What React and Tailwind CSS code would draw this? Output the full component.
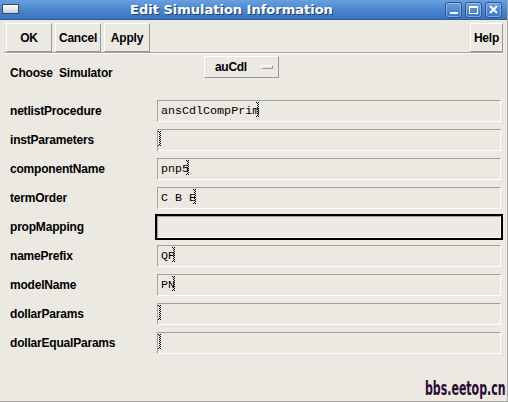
import React from "react";

const Cursor = () => (
  <svg
    width="5"
    height="15"
    viewBox="0 0 5 15"
    shapeRendering="crispEdges"
    className="inline-block align-top relative -top-[2px] -ml-[3px]"
  >
    <g fill="#000">
      <rect x="0" y="0" width="1" height="1" />
      <rect x="2" y="0" width="1" height="1" />
      <rect x="1" y="1" width="1" height="1" />
      <rect x="1" y="3" width="1" height="1" />
      <rect x="1" y="5" width="1" height="1" />
      <rect x="1" y="7" width="1" height="1" />
      <rect x="1" y="9" width="1" height="1" />
      <rect x="1" y="11" width="1" height="1" />
      <rect x="1" y="13" width="1" height="1" />
      <rect x="0" y="14" width="1" height="1" />
      <rect x="2" y="14" width="1" height="1" />
      <rect x="2" y="2" width="1" height="1" />
      <rect x="2" y="4" width="1" height="1" />
      <rect x="2" y="6" width="1" height="1" />
      <rect x="2" y="8" width="1" height="1" />
      <rect x="2" y="10" width="1" height="1" />
      <rect x="2" y="12" width="1" height="1" />
    </g>
  </svg>
);

const rows = [
  { label: "netlistProcedure", value: "ansCdlCompPrim" },
  { label: "instParameters", value: "" },
  { label: "componentName", value: "pnp5" },
  { label: "termOrder", value: "C B E" },
  { label: "propMapping", value: null, focus: true },
  { label: "namePrefix", value: "QP" },
  { label: "modelName", value: "PN" },
  { label: "dollarParams", value: "" },
  { label: "dollarEqualParams", value: "" },
];

const Btn = ({ children, w }) => (
  <div
    className={`${w} h-[29px] flex items-center justify-center border border-t-white border-l-white border-b-[#9a9893] border-r-[#9a9893] text-[12px] font-bold tracking-[-0.2px] text-black`}
  >
    {children}
  </div>
);

const TitleBtn = ({ children }) => (
  <div className="w-[17px] h-[16px] rounded-[3px] border border-[#2a5794] bg-gradient-to-b from-[#6b9ee0] to-[#3c74c0] shadow-[inset_0_0_0_1px_rgba(255,255,255,0.35)] flex items-center justify-center">
    {children}
  </div>
);

export default function App() {
  return (
    <div className="w-[508px] h-[402px] bg-[#ece9e3] flex flex-col border-r border-b border-[#a9a7a1] overflow-hidden font-['Liberation_Sans',Arial,sans-serif]">
      {/* Title bar */}
      <div className="h-[20px] shrink-0 bg-gradient-to-b from-[#6aa0de] via-[#4a86cf] to-[#3b73bd] border-b border-[#2d5b98] flex items-center pl-[2px] pr-[5px]">
        <div className="w-[17px] h-[10px] mt-[-2px] border border-[#3b4a60] bg-gradient-to-b from-white to-[#c8cdd6]" />
        <div className="flex-1 pl-[111px] text-white font-bold text-[13px] leading-[16px] font-['DejaVu_Sans',sans-serif] [text-shadow:1px_1px_0_#1f3f6e]">
          Edit Simulation Information
        </div>
        <div className="flex gap-[3px]">
          <TitleBtn>
            <div className="w-[8px] h-[2px] bg-white mt-[6px]" />
          </TitleBtn>
          <TitleBtn>
            <div className="w-[9px] h-[8px] border-[1.5px] border-white border-t-2" />
          </TitleBtn>
          <TitleBtn>
            <svg width="9" height="9" viewBox="0 0 9 9">
              <path d="M1 1L8 8M8 1L1 8" stroke="#fff" strokeWidth="2" />
            </svg>
          </TitleBtn>
        </div>
      </div>

      {/* Toolbar */}
      <div className="h-[32px] shrink-0 pt-[3px] pl-[6px] pr-[4px] flex gap-[3px]">
        <Btn w="w-[46px]">OK</Btn>
        <Btn w="w-[46px]">Cancel</Btn>
        <Btn w="w-[46px]">Apply</Btn>
        <div className="flex-1" />
        <Btn w="w-[33px]">Help</Btn>
      </div>
      <div className="mx-[4px] h-[2px] shrink-0 border-t border-[#a3a19b] border-b border-b-white" />

      {/* Choose simulator */}
      <div className="h-[46px] shrink-0 flex items-start pl-[10px]">
        <div className="w-[194px] pt-[12px] text-[12px] leading-[14px] font-bold tracking-[-0.2px] [word-spacing:3px] text-black">
          Choose Simulator
        </div>
        <div className="mt-[2px] w-[75px] h-[22px] border border-t-white border-l-white border-b-[#9a9893] border-r-[#9a9893] flex items-center pl-[10px] pr-[5px]">
          <span className="flex-1 text-[12px] font-bold tracking-[-0.3px] text-black leading-[14px]">
            auCdl
          </span>
          <div className="w-[12px] h-[4px] border border-t-white border-l-white border-b-[#9a9893] border-r-[#9a9893]" />
        </div>
      </div>

      {/* Rows */}
      <div className="flex flex-col gap-[7px] shrink-0">
        {rows.map((r) => (
          <div key={r.label} className="flex items-start pl-[10px] pr-[6px] h-[22px]">
            <div className="w-[147px] pt-[4px] text-[12px] leading-[14px] font-bold tracking-[-0.2px] text-black">
              {r.label}
            </div>
            <div
              className={`relative flex-1 h-[22px] border border-t-[#a3a19b] border-l-[#a3a19b] border-b-white border-r-white pl-[3px] pt-[3px] font-['Liberation_Mono',monospace] text-[11.7px] leading-[14px] text-black whitespace-pre ${
                r.focus ? "outline-2 outline-black" : ""
              }`}
            >
              {r.value !== null && (
                <>
                  <span>{r.value}</span>
                  <Cursor />
                </>
              )}
            </div>
          </div>
        ))}
      </div>

      {/* Watermark */}
      <div className="flex-1 flex items-end justify-end pr-[1px] pb-[2px]">
        <div className="origin-right scale-x-[0.55] font-['DejaVu_Sans',sans-serif] font-bold text-[20px] leading-[22px] text-[#2b0b33] whitespace-nowrap">
          bbs.eetop.cn
        </div>
      </div>
    </div>
  );
}
